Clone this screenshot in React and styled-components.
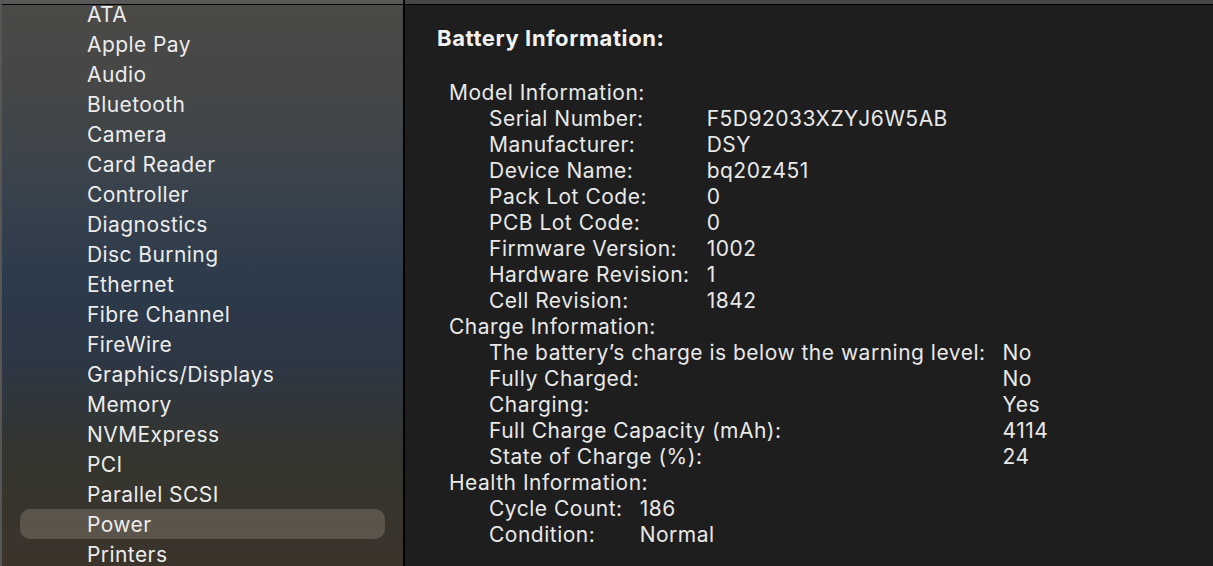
import React from "react";
import styled, { createGlobalStyle } from "styled-components";

const Global = createGlobalStyle`
  html, body { margin: 0; padding: 0; background: #1e1e1e; }
  body { font-family: Inter, "Noto Sans", "Liberation Sans", sans-serif; -webkit-font-smoothing: antialiased; }
`;

const Window = styled.div`
  display: grid;
  grid-template-columns: 403px 2px 1fr;
  width: 1213px;
  height: 566px;
  overflow: hidden;
`;

const Sidebar = styled.aside`
  display: flex;
  flex-direction: column;
  overflow: hidden;
  background: linear-gradient(
    180deg,
    #4b4a47 0%,
    #464746 14%,
    #3a434c 32%,
    #2c3a4b 50%,
    #2d3744 64%,
    #34352f 80%,
    #3b342b 100%
  );
  border-left: 2px solid #565654;
`;

const TopEdge = styled.div`
  flex: none;
  height: 4px;
  background: ${(p) => p.$tone};
  border-bottom: 1px solid #000;
  position: relative;
  z-index: 1;
`;

const SideList = styled.ul`
  list-style: none;
  margin: -6px 0 0;
  padding: 0 18px 0 18px;
  display: flex;
  flex-direction: column;
`;

const SideItem = styled.li`
  height: 30px;
  display: flex;
  align-items: center;
  padding-left: 67px;
  border-radius: 10px;
  font-size: 21px;
  color: #ececec;
  letter-spacing: 0.42px;
  background: ${(p) => (p.$selected ? "rgba(120, 112, 100, 0.55)" : "transparent")};
`;

const Divider = styled.div`
  background: #000;
`;

const Main = styled.main`
  display: flex;
  flex-direction: column;
  background: #1e1e1e;
  color: #e8e8e8;
  overflow: hidden;
`;

const Content = styled.div`
  padding: 18px 0 0 32px;
  display: flex;
  flex-direction: column;
`;

const Title = styled.h1`
  margin: 0 0 27px;
  font-size: 22px;
  font-weight: 700;
  line-height: 30px;
  letter-spacing: 0.6px;
  color: #f2f2f2;
`;

const Section = styled.section`
  display: flex;
  flex-direction: column;
  padding-left: 12px;
  letter-spacing: 0.5px;
`;

const SectionLabel = styled.div`
  font-size: 21px;
  line-height: 26px;
`;

const Rows = styled.dl`
  margin: 0;
  padding-left: 40px;
  display: grid;
  grid-template-columns: max-content max-content;
  column-gap: 17px;
  font-size: 21px;
  line-height: 26px;
`;

const Label = styled.dt`
  margin: 0;
`;

const Value = styled.dd`
  margin: 0;
`;

const sidebarItems = [
  "ATA",
  "Apple Pay",
  "Audio",
  "Bluetooth",
  "Camera",
  "Card Reader",
  "Controller",
  "Diagnostics",
  "Disc Burning",
  "Ethernet",
  "Fibre Channel",
  "FireWire",
  "Graphics/Displays",
  "Memory",
  "NVMExpress",
  "PCI",
  "Parallel SCSI",
  "Power",
  "Printers",
];

const sections = [
  {
    title: "Model Information:",
    rows: [
      ["Serial Number:", "F5D92033XZYJ6W5AB"],
      ["Manufacturer:", "DSY"],
      ["Device Name:", "bq20z451"],
      ["Pack Lot Code:", "0"],
      ["PCB Lot Code:", "0"],
      ["Firmware Version:", "1002"],
      ["Hardware Revision:", "1"],
      ["Cell Revision:", "1842"],
    ],
  },
  {
    title: "Charge Information:",
    rows: [
      ["The battery\u2019s charge is below the warning level:", "No"],
      ["Fully Charged:", "No"],
      ["Charging:", "Yes"],
      ["Full Charge Capacity (mAh):", "4114"],
      ["State of Charge (%):", "24"],
    ],
  },
  {
    title: "Health Information:",
    rows: [
      ["Cycle Count:", "186"],
      ["Condition:", "Normal"],
    ],
  },
];

export default function App() {
  return (
    <>
      <Global />
      <Window>
        <Sidebar>
          <TopEdge $tone="#585856" />
          <SideList>
            {sidebarItems.map((item) => (
              <SideItem key={item} $selected={item === "Power"}>
                {item}
              </SideItem>
            ))}
          </SideList>
        </Sidebar>
        <Divider />
        <Main>
          <TopEdge $tone="#474747" />
          <Content>
            <Title>Battery Information:</Title>
            {sections.map((s) => (
              <Section key={s.title}>
                <SectionLabel>{s.title}</SectionLabel>
                <Rows>
                  {s.rows.map(([l, v]) => (
                    <React.Fragment key={l}>
                      <Label>{l}</Label>
                      <Value>{v}</Value>
                    </React.Fragment>
                  ))}
                </Rows>
              </Section>
            ))}
          </Content>
        </Main>
      </Window>
    </>
  );
}
